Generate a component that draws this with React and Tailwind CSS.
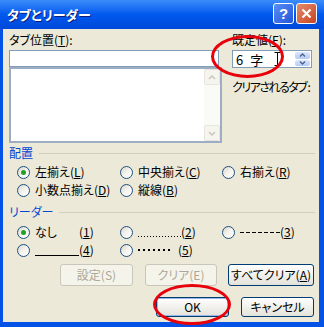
import React from 'react';

const font = "font-[Noto_Sans_CJK_JP,Liberation_Sans,sans-serif] [font-feature-settings:'palt']";

function Radio({ checked }) {
  return (
    <span className="relative w-[13px] h-[13px] rounded-full border border-[#1C5180] bg-gradient-to-br from-[#DCD7CB] via-[#F4F3EE] to-white shrink-0 flex items-center justify-center">
      {checked && <span className="w-[5px] h-[5px] rounded-full bg-[#21A121]" />}
    </span>
  );
}

function Mn({ k }) {
  return <span>(<u>{k}</u>)</span>;
}

function Option({ checked, children }) {
  return (
    <div className="flex items-center h-[18px] gap-[5px] whitespace-nowrap">
      <Radio checked={checked} />
      <span className="flex items-center">{children}</span>
    </div>
  );
}

function GroupHeader({ label }) {
  return (
    <div className="flex items-center h-[14px]">
      <span className="text-[#0046D5] leading-[14px]">{label}</span>
      <div className="flex-1 h-[1px] bg-[#D0D0BF] ml-[6px]" />
    </div>
  );
}

function Button({ children, disabled, width, focused }) {
  const base = 'h-full rounded-[3px] flex items-center justify-center border leading-none whitespace-nowrap shrink-0';
  const style = disabled
    ? 'border-[#C9C7BA] bg-[#F5F4EA] text-[#ACA899]'
    : focused
    ? 'border-[#003C74] bg-gradient-to-b from-white to-[#E3E2DA] text-black shadow-[inset_0_0_0_1px_#98B8EA]'
    : 'border-[#003C74] bg-gradient-to-b from-white to-[#E3E2DA] text-black';
  return <div className={`${base} ${style} ${width}`}>{children}</div>;
}

export default function App() {
  return (
    <div className={`relative w-[324px] h-[327px] bg-[#0552E6] flex flex-col text-[12px] text-black ${font}`}>
      {/* title bar */}
      <div className="h-[29px] flex items-center pl-[7px] pr-[7px] bg-gradient-to-b from-[#3B8CFA] via-[#0058EE] to-[#0048DA]">
        <span className="text-white font-bold text-[13px] leading-none [text-shadow:1px_1px_0_#0A1E7A]">タブとリーダー</span>
        <div className="ml-auto flex gap-[2px] -mt-[2px]">
          <div className="w-[21px] h-[21px] rounded-[3px] border border-white bg-gradient-to-br from-[#5A8EF5] to-[#2453DA] flex items-center justify-center">
            <span className="text-white font-bold text-[15px] leading-none font-[Liberation_Sans,sans-serif]">?</span>
          </div>
          <div className="w-[21px] h-[21px] rounded-[3px] border border-white bg-gradient-to-br from-[#E58A6C] to-[#C7421A] flex items-center justify-center">
            <svg width="11" height="11" viewBox="0 0 11 11">
              <path d="M1.5 1.5 L9.5 9.5 M9.5 1.5 L1.5 9.5" stroke="white" strokeWidth="2.2" />
            </svg>
          </div>
        </div>
      </div>

      {/* body */}
      <div className="flex-1 ml-[3px] mr-[5px] mb-[5px] bg-[#ECE9D8] pl-[6px] pr-[4px] pt-[4px] flex flex-col">
        <div className="flex">
          <div className="w-[213px] flex flex-col">
            <div className="leading-[14px] h-[14px] whitespace-nowrap">タブ位置(<u>T</u>):</div>
            <div className="mt-[3px] h-[17px] w-[210px] bg-white border border-[#7F9DB9]" />
            <div className="h-[76px] bg-white border-2 border-[#9DAEC4] flex justify-end">
              <div className="w-[16px] h-full bg-[#FAFAF7] flex flex-col justify-between">
                <div className="h-[16px] rounded-[2px] border border-[#E8E6DC] bg-[#F5F4EE] flex items-center justify-center">
                  <svg width="8" height="5" viewBox="0 0 8 5"><path d="M1 4 L4 1 L7 4" stroke="#C9C7BA" strokeWidth="1.5" fill="none" /></svg>
                </div>
                <div className="h-[16px] rounded-[2px] border border-[#E8E6DC] bg-[#F5F4EE] flex items-center justify-center">
                  <svg width="8" height="5" viewBox="0 0 8 5"><path d="M1 1 L4 4 L7 1" stroke="#C9C7BA" strokeWidth="1.5" fill="none" /></svg>
                </div>
              </div>
            </div>
          </div>
          <div className="ml-[10px] flex flex-col">
            <div className="leading-[14px] h-[14px] whitespace-nowrap">既定値(<u>F</u>):</div>
            <div className="mt-[3px] h-[18px] w-[80px] bg-white border border-[#7F9DB9] flex items-center">
              <span className="ml-[3px] leading-none text-[13px]">6</span>
              <span className="ml-[7px] leading-none text-[13px]">字</span>
              <svg className="ml-[11px]" width="7" height="14" viewBox="0 0 7 14">
                <path d="M0.5 0.5 H6.5 M3.5 0.5 V13.5 M0.5 13.5 H6.5" stroke="black" strokeWidth="1" />
              </svg>
              <div className="ml-auto mr-[1px] w-[15px] h-[14px] flex flex-col gap-[1px] shrink-0">
                <div className="flex-1 rounded-[2px] bg-gradient-to-b from-[#DCE6FD] to-[#B5CAF7] flex items-center justify-center">
                  <svg width="7" height="4" viewBox="0 0 7 4"><path d="M1 3.5 L3.5 1 L6 3.5" stroke="#4D6185" strokeWidth="1.4" fill="none" /></svg>
                </div>
                <div className="flex-1 rounded-[2px] bg-gradient-to-b from-[#DCE6FD] to-[#B5CAF7] flex items-center justify-center">
                  <svg width="7" height="4" viewBox="0 0 7 4"><path d="M1 0.5 L3.5 3 L6 0.5" stroke="#4D6185" strokeWidth="1.4" fill="none" /></svg>
                </div>
              </div>
            </div>
            <div className="mt-[12px] leading-[14px] whitespace-nowrap tracking-[-1.5px]">クリアされるタブ :</div>
          </div>
        </div>

        {/* 配置 */}
        <div className="mt-[3px]">
          <GroupHeader label="配置" />
        </div>
        <div className="mt-[3px] pl-[8px] grid grid-cols-[103px_102px_1fr]">
          <Option checked>左揃え<Mn k="L" /></Option>
          <Option>中央揃え<Mn k="C" /></Option>
          <Option>右揃え<Mn k="R" /></Option>
          <Option>小数点揃え<Mn k="D" /></Option>
          <Option>縦線<Mn k="B" /></Option>
        </div>

        {/* リーダー */}
        <div className="mt-[6px]">
          <GroupHeader label="リーダー" />
        </div>
        <div className="mt-[4px] pl-[8px] grid grid-cols-[103px_102px_1fr]">
          <Option checked>
            <span className="w-[44px]">なし</span>
            <Mn k="1" />
          </Option>
          <Option>
            <span className="w-[43px] h-[14px] flex items-end pb-[2px]">
              <span className="w-full h-[1px] bg-[repeating-linear-gradient(90deg,#000_0_1px,transparent_1px_3px)]" />
            </span>
            <Mn k="2" />
          </Option>
          <Option>
            <span className="w-[40px] h-[14px] flex items-center">
              <span className="w-full h-[1px] bg-[repeating-linear-gradient(90deg,#000_0_4px,transparent_4px_6px)]" />
            </span>
            <Mn k="3" />
          </Option>
          <Option>
            <span className="w-[44px] h-[14px] flex items-end pb-[1px]">
              <span className="w-full h-[1px] bg-black" />
            </span>
            <Mn k="4" />
          </Option>
          <Option>
            <span className="w-[32px] h-[14px] flex items-center mr-[8px]">
              <span className="w-full h-[2px] bg-[repeating-linear-gradient(90deg,#000_0_2px,transparent_2px_5px)]" />
            </span>
            <Mn k="5" />
          </Option>
        </div>

        {/* buttons */}
        <div className="mt-[5px] h-[22px] flex ml-[51px] gap-[12px]">
          <Button disabled width="w-[73px]">設定(S)</Button>
          <Button disabled width="w-[72px]">クリア(E)</Button>
          <div className="-ml-[1px] h-full">
            <Button width="w-[86px]">すべてクリア(<u>A</u>)</Button>
          </div>
        </div>
        <div className="mt-[11px] h-[20px] flex justify-end gap-[12px] mr-[1px]">
          <Button focused width="w-[73px]">OK</Button>
          <Button width="w-[73px]">キャンセル</Button>
        </div>
      </div>

      {/* red annotation circles */}
      <div className="absolute left-[211px] top-[35px] w-[73px] h-[43px] rounded-[50%] border-[3px] border-[#E8000B]" />
      <div className="absolute left-[153px] top-[284px] w-[78px] h-[41px] rounded-[50%] border-[3px] border-[#E8000B]" />
    </div>
  );
}
